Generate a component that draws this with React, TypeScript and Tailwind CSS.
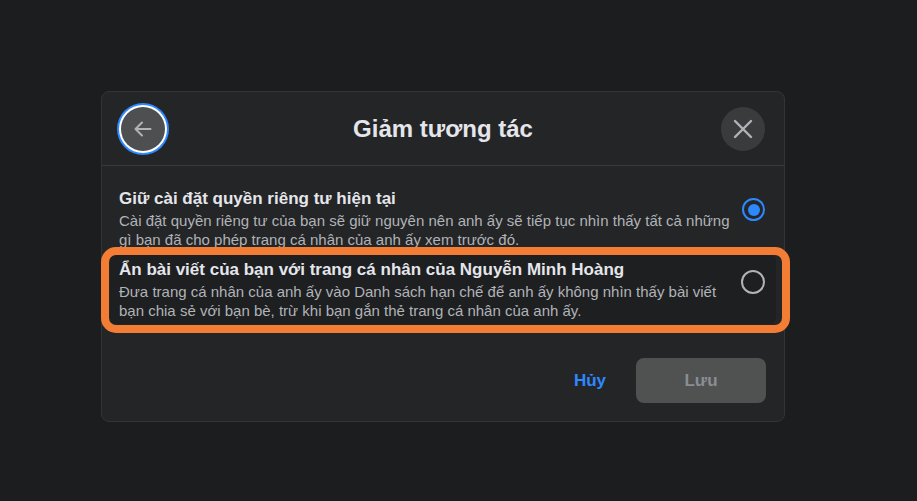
const FONT = "font-['Segoe_UI','Liberation_Sans',Arial,sans-serif]";

type Option = { title: string; desc: string; checked: boolean; highlight?: boolean };

const OPTIONS: Option[] = [
  {
    title: "Giữ cài đặt quyền riêng tư hiện tại",
    desc: "Cài đặt quyền riêng tư của bạn sẽ giữ nguyên nên anh ấy sẽ tiếp tục nhìn thấy tất cả những gì bạn đã cho phép trang cá nhân của anh ấy xem trước đó.",
    checked: true,
  },
  {
    title: "Ẩn bài viết của bạn với trang cá nhân của Nguyễn Minh Hoàng",
    desc: "Đưa trang cá nhân của anh ấy vào Danh sách hạn chế để anh ấy không nhìn thấy bài viết bạn chia sẻ với bạn bè, trừ khi bạn gắn thẻ trang cá nhân của anh ấy.",
    checked: false,
    highlight: true,
  },
];

function Radio({ checked }: { checked: boolean }) {
  return checked ? (
    <div className="mt-[10px] w-[23px] h-[23px] rounded-full border-[2.5px] border-[#2d88ff] grid place-items-center flex-shrink-0">
      <div className="w-[12px] h-[12px] rounded-full bg-[#2d88ff]" />
    </div>
  ) : (
    <div className="mt-[11px] w-[24px] h-[24px] rounded-full border-2 border-[#b0b3b8] flex-shrink-0" />
  );
}

export default function App() {
  return (
    <div className={`w-[917px] h-[501px] bg-[#1c1d1f] pt-[91px] pl-[101px] ${FONT}`}>
      <div className="w-[684px] h-[331px] bg-[#242526] rounded-lg border border-[#333435] flex flex-col">
        {/* Header */}
        <div className="h-[74px] flex items-center justify-between px-[19px] border-b border-[#393a3b]">
          <button className="w-[44px] h-[44px] rounded-full bg-[#4e4f50] grid place-items-center shadow-[0_0_0_2px_#ffffff,0_0_0_4px_#2d88ff] text-[#b0b3b8]">
            <svg width="20" height="20" viewBox="0 0 20 20" fill="none" stroke="currentColor" strokeWidth="2" strokeLinecap="round" strokeLinejoin="round">
              <path d="M2.5 10h15M9 3.5 2.5 10 9 16.5" />
            </svg>
          </button>
          <h1 className="text-[24px] font-bold text-[#e4e6eb]">Giảm tương tác</h1>
          <button className="w-[44px] h-[44px] rounded-full bg-[#3a3b3c] grid place-items-center text-[#b0b3b8]">
            <svg width="22" height="22" viewBox="0 0 22 22" fill="none" stroke="currentColor" strokeWidth="2.4" strokeLinecap="round">
              <path d="M3 3l16 16M19 3 3 19" />
            </svg>
          </button>
        </div>

        {/* Options */}
        <div className="px-2 pt-[18px] flex flex-col gap-[2px]">
          {OPTIONS.map((o) => (
            <div
              key={o.title}
              className={`relative flex items-start justify-between pl-[9px] pr-[11px] py-[4px] rounded-md ${o.highlight ? "bg-[#1e1f21]" : ""}`}
            >
              <div className="w-[620px]">
                <div className="text-[17px] font-bold text-[#e4e6eb] leading-[22px]">{o.title}</div>
                <div className="text-[15px] text-[#b0b3b8] leading-[19px] mt-[1px]">{o.desc}</div>
              </div>
              <Radio checked={o.checked} />
              {o.highlight && (
                <div className="absolute -left-[9px] -right-[14px] -top-[8px] -bottom-[9px] border-[8px] border-[#f47d36] rounded-[15px] pointer-events-none" />
              )}
            </div>
          ))}
        </div>

        {/* Footer */}
        <div className="mt-auto flex justify-end items-center gap-[18px] px-[18px] pb-[18px]">
          <button className="px-3 h-[45px] text-[17px] font-bold text-[#2d88ff]">Hủy</button>
          <button className="w-[130px] h-[45px] rounded-lg bg-[#505151] text-[17px] font-bold text-[#8a8d91]">Lưu</button>
        </div>
      </div>
    </div>
  );
}
